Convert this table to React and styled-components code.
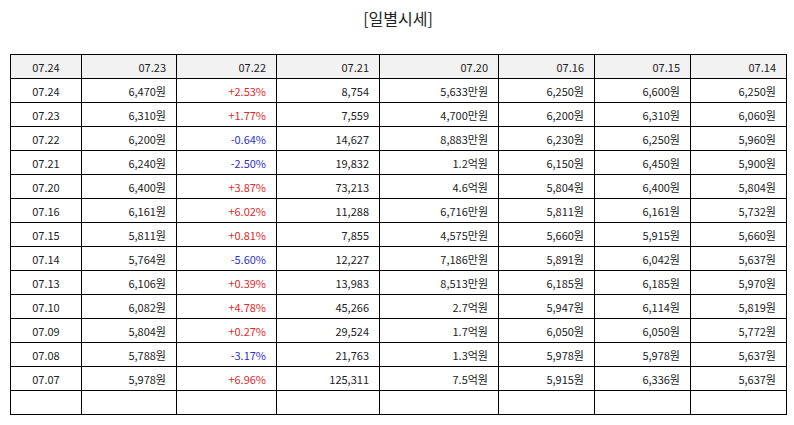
import React from "react";
import styled, { createGlobalStyle } from "styled-components";

const GlobalStyle = createGlobalStyle`
  html, body { margin: 0; padding: 0; background: #fff; }
  body { font-family: "Noto Sans CJK KR", "Noto Sans", sans-serif; color: #222; }
`;

const Page = styled.div`
  width: 794px;
  padding: 6px 0 0 10px;
  box-sizing: border-box;
`;

const Title = styled.h2`
  margin: 0 0 24px;
  width: 776px;
  text-align: center;
  font-size: 16px;
  font-weight: 400;
  line-height: 24px;
  color: #222;
`;

const Table = styled.table`
  width: 776px;
  table-layout: fixed;
  border-collapse: collapse;
  border: 1px solid #000;
  font-size: 11px;
`;

const Row = styled.tr`
  height: 24px;
`;

const Cell = styled.td`
  border: 1px solid #000;
  padding: 0 10px;
  height: 23px;
  box-sizing: border-box;
  white-space: nowrap;
  text-align: ${(p) => (p.$center ? "center" : "right")};
  color: ${(p) => (p.$tone === "up" ? "#e02a2a" : p.$tone === "down" ? "#3030c8" : "#222")};
  background: ${(p) => (p.$head ? "#f2f2f2" : "#fff")};
`;

const widths = [71, 95, 100, 103, 119, 96, 96, 96];
const head = ["07.24", "07.23", "07.22", "07.21", "07.20", "07.16", "07.15", "07.14"];

const rows = [
  ["07.24", "6,470원", "+2.53%", "8,754", "5,633만원", "6,250원", "6,600원", "6,250원"],
  ["07.23", "6,310원", "+1.77%", "7,559", "4,700만원", "6,200원", "6,310원", "6,060원"],
  ["07.22", "6,200원", "-0.64%", "14,627", "8,883만원", "6,230원", "6,250원", "5,960원"],
  ["07.21", "6,240원", "-2.50%", "19,832", "1.2억원", "6,150원", "6,450원", "5,900원"],
  ["07.20", "6,400원", "+3.87%", "73,213", "4.6억원", "5,804원", "6,400원", "5,804원"],
  ["07.16", "6,161원", "+6.02%", "11,288", "6,716만원", "5,811원", "6,161원", "5,732원"],
  ["07.15", "5,811원", "+0.81%", "7,855", "4,575만원", "5,660원", "5,915원", "5,660원"],
  ["07.14", "5,764원", "-5.60%", "12,227", "7,186만원", "5,891원", "6,042원", "5,637원"],
  ["07.13", "6,106원", "+0.39%", "13,983", "8,513만원", "6,185원", "6,185원", "5,970원"],
  ["07.10", "6,082원", "+4.78%", "45,266", "2.7억원", "5,947원", "6,114원", "5,819원"],
  ["07.09", "5,804원", "+0.27%", "29,524", "1.7억원", "6,050원", "6,050원", "5,772원"],
  ["07.08", "5,788원", "-3.17%", "21,763", "1.3억원", "5,978원", "5,978원", "5,637원"],
  ["07.07", "5,978원", "+6.96%", "125,311", "7.5억원", "5,915원", "6,336원", "5,637원"],
  ["", "", "", "", "", "", "", ""],
];

const toneOf = (v, i) => (i === 2 && v ? (v.startsWith("-") ? "down" : "up") : undefined);

export default function App() {
  return (
    <>
      <GlobalStyle />
      <Page>
        <Title>[일별시세]</Title>
        <Table>
          <colgroup>
            {widths.map((w, i) => (
              <col key={i} style={{ width: w }} />
            ))}
          </colgroup>
          <thead>
            <Row>
              {head.map((h, i) => (
                <Cell as="th" key={i} $head $center={i === 0} style={{ fontWeight: 400 }}>
                  {h}
                </Cell>
              ))}
            </Row>
          </thead>
          <tbody>
            {rows.map((r, ri) => (
              <Row key={ri}>
                {r.map((v, i) => (
                  <Cell key={i} $center={i === 0} $tone={toneOf(v, i)}>
                    {v}
                  </Cell>
                ))}
              </Row>
            ))}
          </tbody>
        </Table>
      </Page>
    </>
  );
}
